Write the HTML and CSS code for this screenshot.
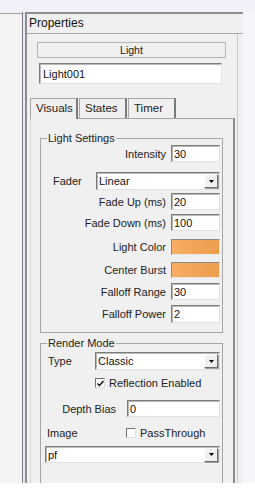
FILE: index.html
```html
<!DOCTYPE html>
<html lang="en">
<head>
<meta charset="UTF-8" />
<title>Properties</title>
<link rel="stylesheet" href="styles.css">
</head>
<body>
<div class="screen">
  <div class="top-strip"></div>
  <div class="workspace">
    <div class="dock-left"></div>
    <div class="splitter"></div>
    <div class="panel">
      <div class="panel-title">Properties</div>
      <div class="panel-body">
        <div class="obj-type">Light</div>
        <input class="name-input" value="Light001" />
        <div class="tabs">
          <div class="tab active">Visuals</div>
          <div class="tab">States</div>
          <div class="tab">Timer</div>
        </div>
        <div class="tab-page">
          <!-- Light Settings -->
          <fieldset class="group light-group">
            <legend>Light Settings</legend>
            <div class="row r-intensity"><label>Intensity</label><input class="field" value="30" /></div>
            <div class="row r-fader">
              <label>Fader</label>
              <div class="combo fader-combo"><span>Linear</span><span class="drop"><svg width="5" height="3" viewBox="0 0 5 3"><path d="M0 0h5L2.5 3z" fill="#000"/></svg></span></div>
            </div>
            <div class="row r-fadeup"><label>Fade Up (ms)</label><input class="field" value="20" /></div>
            <div class="row r-fadedown"><label>Fade Down (ms)</label><input class="field" value="100" /></div>
            <div class="row r-color"><label>Light Color</label><div class="swatch"></div></div>
            <div class="row r-burst"><label>Center Burst</label><div class="swatch"></div></div>
            <div class="row r-range"><label>Falloff Range</label><input class="field" value="30" /></div>
            <div class="row r-power"><label>Falloff Power</label><input class="field" value="2" /></div>
          </fieldset>
          <!-- Render Mode -->
          <fieldset class="group render-group">
            <legend>Render Mode</legend>
            <div class="rm-row rm-type">
              <label>Type</label>
              <div class="combo type-combo"><span>Classic</span><span class="drop"><svg width="5" height="3" viewBox="0 0 5 3"><path d="M0 0h5L2.5 3z" fill="#000"/></svg></span></div>
            </div>
            <div class="rm-row rm-reflect">
              <span class="check"><svg width="7" height="7" viewBox="0 0 7 7"><path d="M0.5 3.5l2 2 4-4.5" fill="none" stroke="#000" stroke-width="1.3"/></svg></span>
              <span>Reflection Enabled</span>
            </div>
            <div class="rm-row rm-depth"><label>Depth Bias</label><input class="field depth-field" value="0" /></div>
            <div class="rm-row rm-image">
              <label>Image</label>
              <span class="check"></span>
              <span>PassThrough</span>
            </div>
            <div class="combo image-combo"><span>pf</span><span class="drop"><svg width="5" height="3" viewBox="0 0 5 3"><path d="M0 0h5L2.5 3z" fill="#000"/></svg></span></div>
          </fieldset>
        </div>
      </div>
    </div>
    <div class="dock-right"></div>
  </div>
</div>
</body>
</html>
```

FILE: styles.css
```css
* { box-sizing: border-box; }
body {
  margin: 0;
  background: #fff;
  font-family: "Liberation Sans", Arial, sans-serif;
  font-size: 11px;
  color: #222;
}
.screen {
  width: 255px;
  height: 483px;
  background: #f1f2f9;
  display: flex;
  flex-direction: column;
  overflow: hidden;
}
.top-strip {
  height: 12px;
  flex: none;
}
.workspace {
  flex: 1;
  display: flex;
  min-height: 0;
}
.dock-left {
  width: 22px;
  background: #f4f4f4;
  border-top: 1px solid #a2a2a2;
  margin-top: 1px;
}
.splitter {
  width: 3px;
  border-left: 1px solid #7e7e7e;
  background: #e8e9f6;
}
.panel {
  width: 218px;
  background: #f0f0f0;
  border-top: 2px solid #8e8e8e;
  border-left: 2px solid #8e8e8e;
  display: flex;
  flex-direction: column;
  overflow: hidden;
}
.dock-right {
  flex: 1;
  background: #f6f6fa;
}
.panel-title {
  height: 20px;
  line-height: 19px;
  padding-left: 2px;
  font-size: 12px;
  color: #111;
  border-bottom: 1px solid #a8a8a8;
}
.panel-body {
  flex: 1;
  margin-right: 5px;
  padding: 8px 2px 0 3px;
  border-right: 1px solid #cbcbcb;
  overflow: hidden;
}
.obj-type {
  width: 189px;
  height: 16px;
  margin-left: 7px;
  border: 1px solid #b4b4b4;
  text-align: center;
  line-height: 14px;
  font-size: 10.5px;
}
.name-input,
.field,
.combo {
  display: block;
  font-family: inherit;
  font-size: 11px;
  color: #111;
  background: #fff;
  border: 1px solid;
  border-color: #7c7c7c #e2e2e2 #e2e2e2 #7c7c7c;
  box-shadow: inset 1px 1px 0 #b9b9b9;
  outline: none;
  margin: 0;
  padding: 0 2px;
}
.name-input {
  width: 183px;
  height: 21px;
  margin: 5px 0 0 9px;
  padding-left: 3px;
}
.tabs {
  display: flex;
  margin-top: 14px;
  height: 20px;
}
.tab {
  width: 48px;
  height: 20px;
  line-height: 19px;
  padding-left: 5px;
  font-size: 11.5px;
  border: 1px solid #a6a6a6;
  border-right: 2px solid #7a7a7a;
  border-bottom: none;
  background: #f0f0f0;
}
.tab + .tab { margin-left: 1px; }
.tab.active {
  position: relative;
  z-index: 1;
  height: 21px;
}
.tab-page {
  height: 380px;
  border: 1px solid #a6a6a6;
  border-left-color: #d4d4d4;
  border-right: 2px solid #8a8a8a;
  padding: 13px 10px 0 9px;
}
.group {
  margin: 0;
  padding: 0 2px 9px 0;
  min-width: 0;
  border: 1px solid #a6a6a6;
}
.group legend {
  margin-left: 6px;
  padding: 0 1px;
  line-height: 13px;
  font-size: 11px;
}
.row {
  display: flex;
  align-items: center;
  justify-content: flex-end;
}
.row label {
  margin-right: 5px;
}
.field {
  width: 49px;
  height: 17px;
}
.r-fader { margin-top: 10px; justify-content: space-between; }
.r-fader label { padding-left: 12px; }
.r-fadeup { margin-top: 3px; }
.r-fadedown { margin-top: 4px; }
.r-color { margin-top: 8px; }
.r-burst { margin-top: 7px; }
.r-range { margin-top: 5px; }
.r-power { margin-top: 5px; }
.r-power .field { height: 18px; }
.combo {
  display: flex;
  align-items: center;
  justify-content: space-between;
  height: 18px;
  padding: 0 1px 0 2px;
}
.fader-combo { width: 124px; }
.drop {
  width: 14px;
  height: 14px;
  display: flex;
  align-items: center;
  justify-content: center;
  background: #f0f0f0;
  border: 1px solid;
  border-color: #fff #6e6e6e #6e6e6e #fff;
  box-shadow: 1px 1px 0 #a0a0a0;
}
.swatch {
  width: 49px;
  height: 16px;
  border: 1px solid;
  border-color: #8a8a8a #e6e6e6 #e6e6e6 #8a8a8a;
  background: linear-gradient(90deg, #f8ae63, #ec9c4d);
}
.render-group {
  margin-top: 4px;
  padding-bottom: 40px;
}
.rm-row {
  display: flex;
  align-items: center;
}
.rm-type { margin-top: 2px; }
.rm-type label {
  width: 54px;
  padding-left: 7px;
}
.type-combo { width: 125px; }
.rm-reflect {
  margin-top: 7px;
  padding-left: 54px;
  height: 12px;
}
.check {
  width: 10px;
  height: 10px;
  margin-right: 4px;
  display: flex;
  align-items: center;
  justify-content: center;
  background: #fff;
  border: 1px solid;
  border-color: #6f6f6f #e0e0e0 #e0e0e0 #6f6f6f;
}
.rm-depth { margin-top: 11px; }
.rm-depth label {
  width: 75px;
  text-align: right;
  margin-right: 11px;
}
.depth-field { width: 93px; }
.rm-image {
  margin-top: 10px;
  height: 12px;
}
.rm-image label {
  width: 85px;
  padding-left: 6px;
}
.image-combo {
  width: 175px;
  height: 17px;
  margin: 7px 0 0 4px;
}
```
